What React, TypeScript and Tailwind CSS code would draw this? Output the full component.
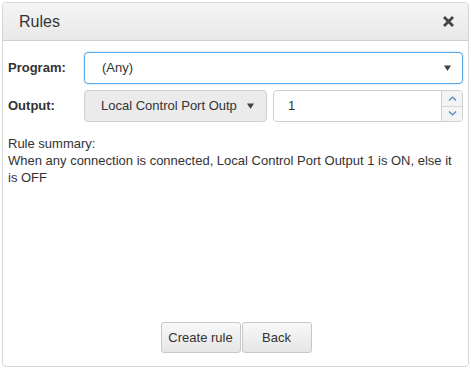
import React from 'react';

const Caret = () => (
    <svg width="7" height="6" viewBox="0 0 7 6" className="fill-[#444]">
        <path d="M0 0.5h7L3.5 6z" />
    </svg>
);

export default function App() {
    return (
        <div className="w-[471px] h-[369px] bg-white p-[2px] font-['Liberation_Sans',Arial,sans-serif] text-[13px] text-[#333]">
            <div className="h-full flex flex-col border border-[#d6d6d6] rounded-[4px] overflow-hidden">
                {/* Header */}
                <div className="h-[38px] shrink-0 flex items-center justify-between pl-[16px] pr-[14px] bg-gradient-to-b from-[#f5f5f5] to-[#e8e8e8] border-b border-[#d0d0d0]">
                    <span className="text-[16px] text-[#333]">Rules</span>
                    <svg width="11" height="11" viewBox="0 0 11 11" className="stroke-[#444]" strokeWidth="2.8" strokeLinecap="square">
                        <path d="M2 2l7 7M9 2l-7 7" />
                    </svg>
                </div>

                {/* Body */}
                <div className="flex-1 flex flex-col pl-[5px] pr-[5px] pt-[11px]">
                    <div className="flex items-center h-[32px]">
                        <span className="w-[76px] font-bold text-[13px]">Program:</span>
                        <div className="flex-1 h-[32px] flex items-center justify-between pl-[17px] pr-[11px] border border-[#5aa7e6] rounded-[4px] shadow-[0_0_2px_rgba(90,167,230,0.6)]">
                            <span>(Any)</span>
                            <Caret />
                        </div>
                    </div>

                    <div className="flex items-center h-[32px] mt-[6px]">
                        <span className="w-[76px] font-bold">Output:</span>
                        <div className="w-[183px] h-[32px] flex items-center justify-between pl-[16px] pr-[12px] bg-[#ebebeb] border border-[#cfcfcf] rounded-[4px]">
                            <span className="whitespace-nowrap overflow-hidden">Local Control Port Outp</span>
                            <Caret />
                        </div>
                        <div className="flex-1 ml-[6px] h-[32px] flex border border-[#cfcfcf] rounded-[4px] overflow-hidden">
                            <div className="flex-1 flex items-center pl-[14px]">1</div>
                            <div className="w-[21px] flex flex-col border-l border-[#cfcfcf] bg-[#f4f4f4]">
                                <div className="flex-1 flex items-center justify-center border-b border-[#d6d6d6]">
                                    <svg width="9" height="5" viewBox="0 0 9 5" fill="none" className="stroke-[#4a86c0]" strokeWidth="1.2">
                                        <path d="M1 4.5L4.5 1L8 4.5" />
                                    </svg>
                                </div>
                                <div className="flex-1 flex items-center justify-center">
                                    <svg width="9" height="5" viewBox="0 0 9 5" fill="none" className="stroke-[#4a86c0]" strokeWidth="1.2">
                                        <path d="M1 0.5L4.5 4L8 0.5" />
                                    </svg>
                                </div>
                            </div>
                        </div>
                    </div>

                    <div className="mt-[13px] leading-[17px] pr-[8px]">
                        <div>Rule summary:</div>
                        <div>When any connection is connected, Local Control Port Output 1 is ON, else it is OFF</div>
                    </div>

                    <div className="mt-auto mb-[13px] flex justify-center gap-[1px] pl-[1px]">
                        <button className="w-[80px] h-[31px] border border-[#c8c8c8] rounded-[3px] bg-gradient-to-b from-[#f8f8f8] to-[#e6e6e6] text-[13px] text-[#333]">Create rule</button>
                        <button className="w-[70px] h-[31px] border border-[#c8c8c8] rounded-[3px] bg-gradient-to-b from-[#f8f8f8] to-[#e6e6e6] text-[13px] text-[#333]">Back</button>
                    </div>
                </div>
            </div>
        </div>
    );
}
